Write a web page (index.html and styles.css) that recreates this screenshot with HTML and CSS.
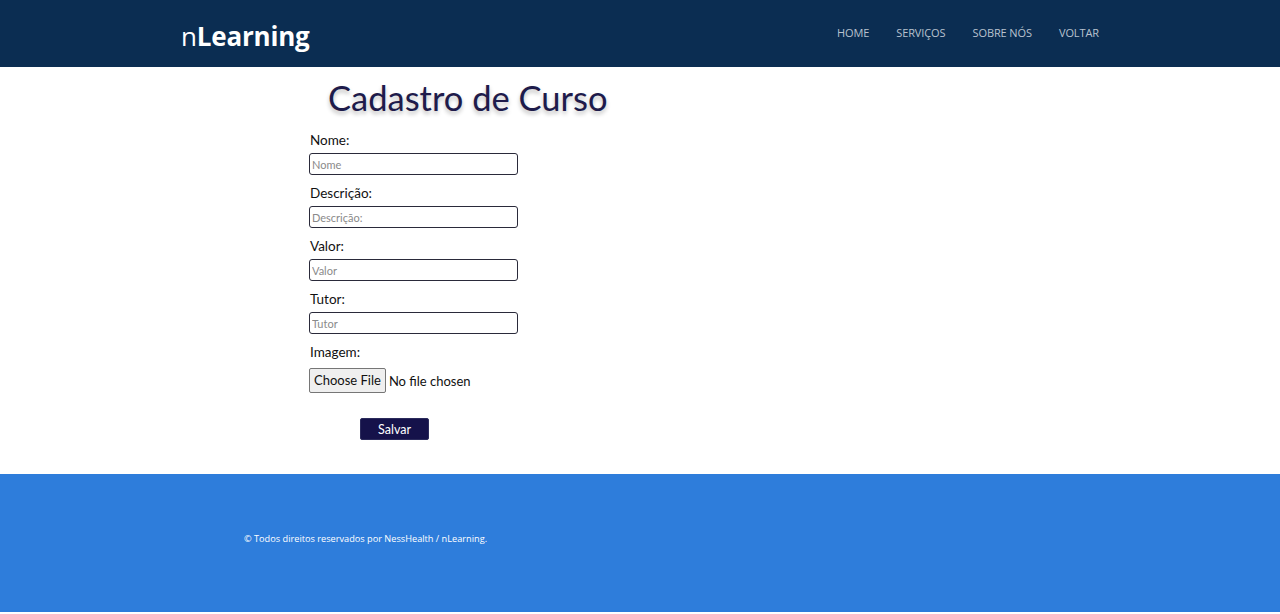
FILE: index.html
```html
<!DOCTYPE html>
<html lang="pt-BR">
<head>
<meta charset="utf-8">
<title>Cadastro de Curso</title>
<link rel="stylesheet" href="styles.css">
</head>
<body>
<header class="topbar">
  <div class="topbar-inner">
    <div class="logo">n<b>Learning</b></div>
    <nav class="nav">
      <a href="#">HOME</a>
      <a href="#">SERVIÇOS</a>
      <a href="#">SOBRE NÓS</a>
      <a href="#">VOLTAR</a>
    </nav>
  </div>
</header>
<main class="main">
  <h1 class="title">Cadastro de Curso</h1>
  <form class="form">
    <label class="field"><span class="lbl">Nome:</span><input class="inp" type="text" placeholder="Nome"></label>
    <label class="field"><span class="lbl">Descrição:</span><input class="inp" type="text" placeholder="Descrição:"></label>
    <label class="field"><span class="lbl">Valor:</span><input class="inp" type="text" placeholder="Valor"></label>
    <label class="field"><span class="lbl">Tutor:</span><input class="inp" type="text" placeholder="Tutor"></label>
    <div class="field"><span class="lbl">Imagem:</span>
      <div class="file"><span class="file-btn">Choose File</span><span class="file-txt">No file chosen</span></div>
    </div>
    <button class="save" type="button">Salvar</button>
  </form>
</main>
<footer class="footer">
  <p class="copy">© Todos direitos reservados por NessHealth / nLearning.</p>
</footer>
</body>
</html>
```
FILE: styles.css
```css
* { box-sizing: border-box; }
html, body { margin: 0; padding: 0; }
body { background: #fff; font-family: Lato, "Open Sans", sans-serif; color: #111; }

.topbar { background: #0b2d52; height: 67px; }
.topbar-inner { width: 918px; margin: 0 auto; height: 100%; display: flex; align-items: center; justify-content: space-between; }
.logo { font-family: "Open Sans", sans-serif; color: #fff; font-size: 26px; position: relative; top: 2px; letter-spacing: -0.2px; }
.logo b { font-weight: 700; }
.nav { display: flex; gap: 27px; position: relative; top: -1px; }
.nav a { font-family: "Open Sans", sans-serif; font-size: 11px; color: #b8c2cf; text-decoration: none; letter-spacing: -0.1px; }

.main { padding: 10px 0 34px 310px; }
.title { font-family: Lato, sans-serif; font-weight: 400; font-size: 34.5px; color: #1e1b4b; margin: 0 0 13px 18px; line-height: 42px; text-shadow: 0 3px 4px rgba(0,0,0,0.25); }

.form { display: flex; flex-direction: column; align-items: flex-start; }
.field { display: flex; flex-direction: column; align-items: flex-start; margin-bottom: 10px; }
.lbl { font-size: 13.5px; line-height: 16px; margin-bottom: 5px; }
.inp { width: 209px; height: 22px; border: 1px solid #2a2a3a; border-radius: 3px; padding: 0 2px; font-family: Lato, sans-serif; font-size: 11px; color: #222; margin-left: -1px; }
.inp::placeholder { color: #8a8a8a; }
.file { display: flex; align-items: center; margin-left: -1px; margin-top: 3px; }
.file-btn { font-family: Lato, sans-serif; font-size: 13px; background: #efefef; border: 1px solid #767676; border-radius: 2px; height: 25px; line-height: 23px; padding: 0 4px; color: #111; }
.file-txt { font-size: 13px; margin-left: 3px; }
.save { margin: 15px 0 0 50px; width: 69px; height: 22px; background: #15124a; color: #fff; border: 1px solid #2b2b5c; border-radius: 2px; font-family: Lato, sans-serif; font-size: 12.5px; padding: 0; }

.footer { background: #2e7ddb; height: 138px; padding: 58px 0 0 244px; }
.copy { margin: 0; font-family: "Open Sans", sans-serif; font-size: 9.2px; line-height: 13px; color: #fff; }
```
